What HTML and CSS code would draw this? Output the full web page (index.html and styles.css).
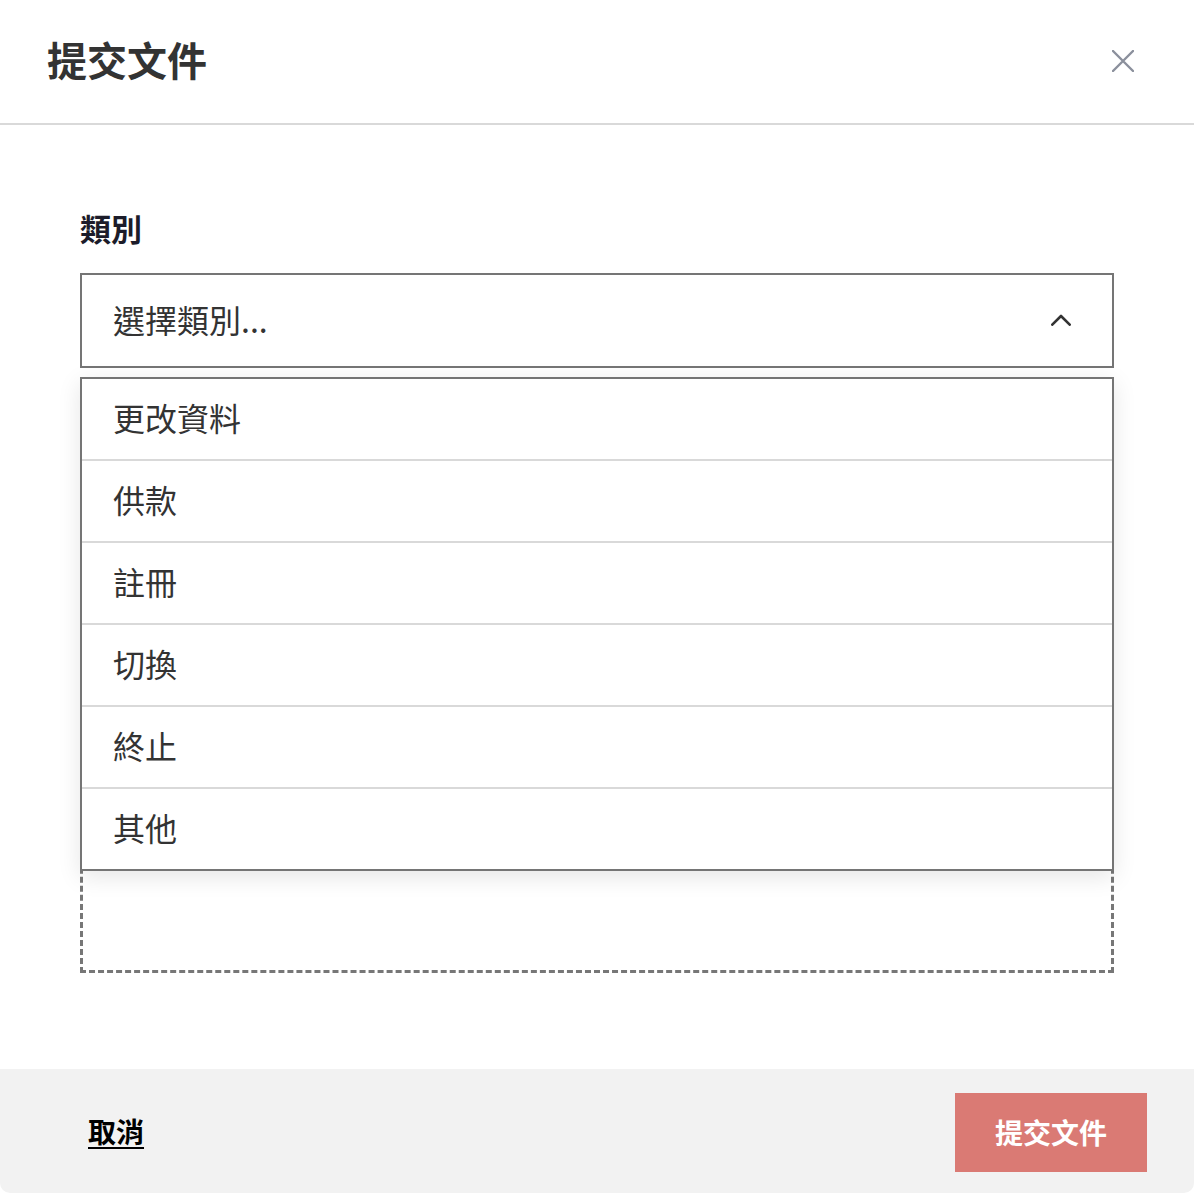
FILE: index.html
```html
<!DOCTYPE html>
<html lang="zh-Hant">
<head>
<meta charset="utf-8">
<title>提交文件</title>
<link rel="stylesheet" href="styles.css">
</head>
<body>
<div class="modal">
  <header class="modal-header">
    <h1 class="modal-title">提交文件</h1>
    <button class="close-btn" aria-label="關閉">
      <svg width="22" height="22" viewBox="0 0 22 22"><path d="M1 1 L21 21 M21 1 L1 21" stroke="#8b909c" stroke-width="2.4" fill="none" stroke-linecap="round"/></svg>
    </button>
  </header>
  <main class="modal-body">
    <label class="field-label">類別</label>
    <div class="select-wrap">
      <div class="select">
        <span class="select-text">選擇類別...</span>
        <svg class="chevron" width="20" height="12" viewBox="0 0 20 12"><path d="M1.3 10.7 L10 2 L18.7 10.7" stroke="#333" stroke-width="2.6" fill="none" stroke-linecap="round" stroke-linejoin="round"/></svg>
      </div>
      <ul class="options">
        <li class="option">更改資料</li>
        <li class="option">供款</li>
        <li class="option">註冊</li>
        <li class="option">切換</li>
        <li class="option">終止</li>
        <li class="option">其他</li>
      </ul>
    </div>
    <div class="dropzone"></div>
  </main>
  <footer class="modal-footer">
    <a class="cancel" href="#">取消</a>
    <button class="submit">提交文件</button>
  </footer>
</div>
</body>
</html>
```
FILE: styles.css
```css
* { box-sizing: border-box; }
html, body {
  margin: 0;
  padding: 0;
  background: #ffffff;
  font-family: "Noto Sans CJK TC", "Noto Sans", sans-serif;
}
.modal {
  width: 1194px;
  height: 1193px;
  display: flex;
  flex-direction: column;
  background: #fff;
  border-radius: 0 0 10px 10px;
  overflow: hidden;
}
.modal-header {
  height: 125px;
  flex: none;
  display: flex;
  align-items: center;
  justify-content: space-between;
  padding: 0 60px 6px 47px;
  border-bottom: 2px solid #d9d9d9;
}
.modal-title {
  margin: 0;
  font-size: 40px;
  font-weight: 700;
  color: #333333;
  line-height: 1;
}
.close-btn {
  border: 0;
  background: none;
  padding: 0;
  width: 22px;
  height: 22px;
  display: flex;
  margin-bottom: -4px;
}
.modal-body {
  flex: 1;
  padding: 81px 80px 0 80px;
}
.field-label {
  display: block;
  font-size: 31px;
  font-weight: 700;
  color: #1c1c2a;
  line-height: 44px;
  margin-bottom: 23px;
}
.select-wrap {
  position: relative;
}
.select {
  height: 95px;
  border: 2px solid #757575;
  display: flex;
  align-items: center;
  justify-content: space-between;
  padding: 0 41px 4px 31px;
  background: #fff;
}
.select-text {
  font-size: 32px;
  color: #333333;
}
.chevron {
  margin-top: 2px;
}
.options {
  position: absolute;
  left: 0;
  right: 0;
  top: 104px;
  margin: 0;
  padding: 0;
  list-style: none;
  background: #fff;
  border: 2px solid #757575;
  box-shadow: 0 6px 22px rgba(0, 0, 0, 0.10);
  z-index: 2;
}
.option {
  height: 82px;
  display: flex;
  align-items: center;
  padding: 0 0 4px 31px;
  font-size: 32px;
  color: #333333;
  border-top: 2px solid #d9d9d9;
}
.option:first-child {
  height: 80px;
  border-top: 0;
}
.dropzone {
  margin-top: 40px;
  height: 565px;
  border: 3px dashed #777777;
}
.modal-footer {
  height: 124px;
  flex: none;
  background: #f2f2f2;
  display: flex;
  align-items: center;
  justify-content: space-between;
  padding: 2px 47px 0 88px;
}
.cancel {
  font-size: 28px;
  font-weight: 700;
  color: #000;
  text-decoration: underline;
  text-underline-offset: 4px;
  margin-top: -2px;
}
.submit {
  width: 192px;
  height: 79px;
  border: 0;
  background: #da7a74;
  color: #fff;
  font-family: inherit;
  font-size: 28px;
  font-weight: 700;
  padding: 0;
}
```
